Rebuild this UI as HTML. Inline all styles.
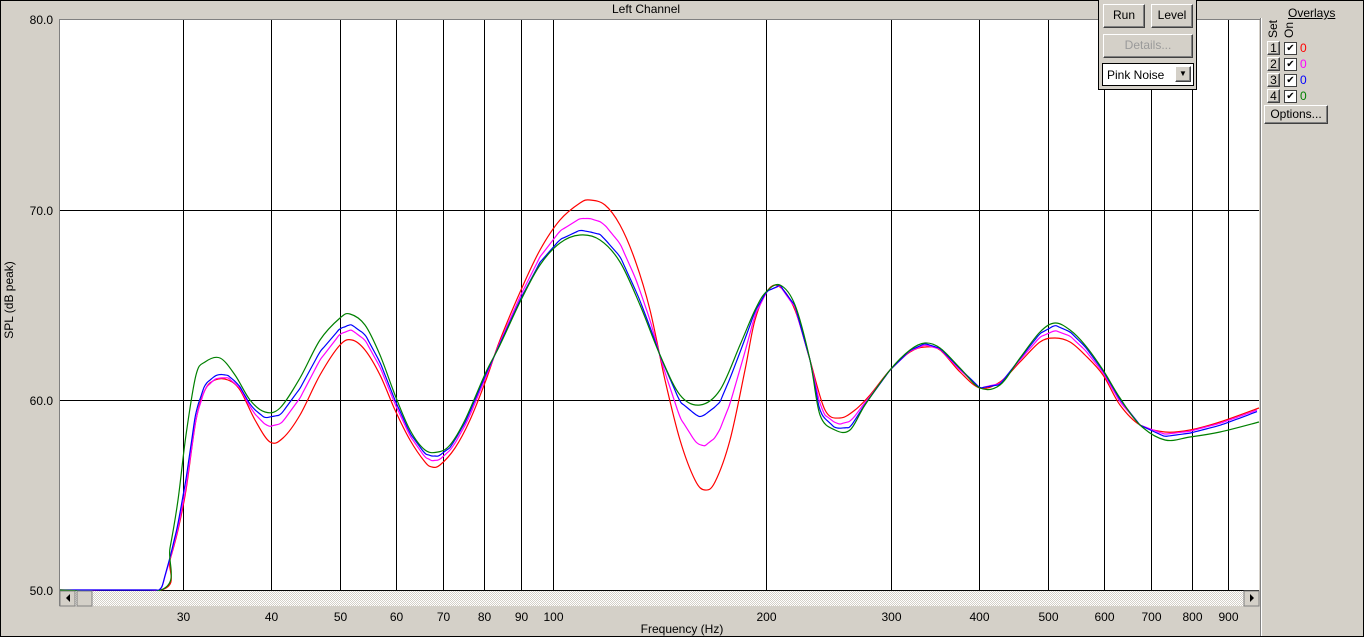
<!DOCTYPE html>
<html><head><meta charset="utf-8"><style>
body{margin:0;width:1364px;height:637px;background:#d4d0c8;font-family:"Liberation Sans",Arial,sans-serif;font-size:12px;overflow:hidden;position:relative}
.a{position:absolute}
.btn{position:absolute;background:#d4d0c8;border:1px solid;border-color:#fff #404040 #404040 #fff;box-shadow:inset -1px -1px 0 #808080;text-align:center;font-size:12px;line-height:20px}
.lbl{position:absolute;font-size:12px}
</style></head><body>
<div class="a" style="left:0;top:0;width:1362px;height:635px;border:1px solid #000"></div>
<div class="lbl" style="left:612px;top:2px">Left Channel</div>
<svg class="a" style="left:0;top:0" width="1364" height="637">
<rect x="60" y="20" width="1199" height="570" fill="#fff"/>
<g stroke="#000" stroke-width="1">
<line x1="60" y1="210.5" x2="1259" y2="210.5"/><line x1="60" y1="400.5" x2="1259" y2="400.5"/>
<line x1="60" y1="590.5" x2="1259" y2="590.5"/>
<g id="vg"></g>
</g>
<line x1="59.5" y1="19" x2="59.5" y2="606" stroke="#808080"/>
<line x1="59" y1="19.5" x2="1260" y2="19.5" stroke="#808080"/>
<g id="curves" fill="none" stroke-width="1.2"></g>
<text x="13" y="300" transform="rotate(-90 13 300)" text-anchor="middle" font-size="12" font-family="Liberation Sans">SPL (dB peak)</text>
<g font-size="12" font-family="Liberation Sans" text-anchor="end">
<text x="53" y="24">80.0</text><text x="53" y="215">70.0</text><text x="53" y="405">60.0</text><text x="53" y="595">50.0</text>
</g>
<g id="xl" font-size="12" font-family="Liberation Sans" text-anchor="middle"></g>
<text x="682" y="633" text-anchor="middle" font-size="12" font-family="Liberation Sans">Frequency (Hz)</text>
<defs><pattern id="hp" width="2" height="2" patternUnits="userSpaceOnUse"><rect width="2" height="2" fill="#fff"/><rect width="1" height="1" fill="#d4d0c8"/><rect x="1" y="1" width="1" height="1" fill="#d4d0c8"/></pattern></defs>
<rect x="60" y="591" width="1199" height="15" fill="url(#hp)"/>
<rect x="60" y="591" width="15" height="15" fill="#d4d0c8" stroke="#808080"/>
<polygon points="70,594 70,602 66,598" fill="#000"/>
<rect x="77" y="591" width="15" height="15" fill="#d4d0c8" stroke="#808080"/>
<rect x="1244" y="591" width="15" height="15" fill="#d4d0c8" stroke="#808080"/>
<polygon points="1250,594 1250,602 1254,598" fill="#000"/>
<line x1="1261.5" y1="18" x2="1261.5" y2="636" stroke="#fff"/>
<line x1="1260.5" y1="18" x2="1260.5" y2="636" stroke="#808080"/>
</svg>
<div class="a" style="left:1098px;top:0;width:97px;height:89px;border:1px solid #000;border-top:none;background:#d4d0c8"></div>
<div class="btn" style="left:1103px;top:4px;width:40px;height:22px">Run</div>
<div class="btn" style="left:1151px;top:4px;width:40px;height:22px">Level</div>
<div class="btn" style="left:1103px;top:34px;width:88px;height:22px;color:#9a9a9a">Details...</div>
<div class="a" style="left:1102px;top:63px;width:90px;height:21px;background:#fff;border:1px solid #000"><span style="position:absolute;left:4px;top:4px">Pink Noise</span><div class="btn" style="left:72px;top:2px;width:14px;height:14px;line-height:14px;font-size:8px">▼</div></div>
<div class="lbl" style="left:1288px;top:6px;text-decoration:underline">Overlays</div>
<div class="lbl" style="left:1266px;top:38px;transform:rotate(-90deg);transform-origin:0 0">Set</div>
<div class="lbl" style="left:1282px;top:38px;transform:rotate(-90deg);transform-origin:0 0">On</div>
<div id="ov"></div>
<div class="btn" style="left:1264px;top:105px;width:62px;height:17px;line-height:17px">Options...</div>
<script>
const X=f=>553+707.6*Math.log10(f/100);
let vg='',xl='';
[30,40,50,60,70,80,90,100,200,300,400,500,600,700,800,900].forEach(f=>{const x=Math.round(X(f))+.5;vg+=`<line x1="${x}" y1="20" x2="${x}" y2="590"/>`;xl+=`<text x="${x}" y="621">${f}</text>`});
document.getElementById('vg').innerHTML=vg;document.getElementById('xl').innerHTML=xl;
const R=[[60,590],[161,590],[170,560],[178,530],[186,490],[196,420],[205,390],[215,380],[228,380],[240,390],[255,420],[270,442],[283,438],[300,415],[320,375],[340,345],[352,340],[365,350],[380,375],[395,410],[410,440],[425,462],[432,467],[440,465],[455,448],[470,420],[486,380],[500,340],[521,290],[540,250],[560,220],[580,203],[590,200],[605,205],[620,225],[635,260],[650,310],[665,380],[680,440],[695,480],[705,490],[715,482],[730,440],[745,370],[755,320],[768,290],[780,287],[795,310],[810,360],[825,410],[840,418],[855,410],[870,395],[890,370],[910,352],[925,347],[940,350],[960,372],[980,388],[1000,382],[1020,362],[1040,342],[1055,338],[1070,342],[1085,355],[1103,375],[1120,405],[1140,425],[1165,432],[1190,430],[1220,422],[1259,408]];
const G=[[60,590],[161,590],[170,548],[178,500],[186,435],[196,375],[205,362],[220,358],[235,375],[250,400],[265,412],[280,408],[300,378],[320,340],[340,318],[350,314],[365,325],[380,355],[395,395],[410,430],[425,450],[438,452],[450,445],[465,420],[486,372],[500,345],[521,300],[540,265],[560,243],[580,235],[600,240],[620,262],[640,305],[660,355],[680,395],[700,405],[720,390],[740,345],[755,310],[766,292],[780,285],[795,305],[810,360],[820,415],[835,430],[850,430],[865,405],[890,370],[910,350],[925,343],[940,348],[960,368],[980,388],[1000,385],[1020,358],[1040,332],[1055,323],[1070,330],[1085,345],[1103,370],[1120,398],[1140,425],[1165,440],[1190,437],[1220,432],[1259,422]];
const TB=[[60,0.8],[215,0.8],[270,0.2],[345,0.4],[440,0.3],[560,0.15],[1103,0.15],[1200,0.6],[1259,0.8]];
const TM=[[60,0.95],[215,0.95],[270,0.5],[345,0.6],[440,0.6],[600,0.5],[1103,0.5],[1200,0.85],[1259,0.9]];
function interp(P,x){for(let i=1;i<P.length;i++)if(x<=P[i][0]){const a=P[i-1],b=P[i];return a[1]+(b[1]-a[1])*(x-a[0])/(b[0]-a[0]||1)}return P[P.length-1][1]}
function smooth(P){let d=`M${P[0][0]},${P[0][1]}`;for(let i=0;i<P.length-1;i++){const p0=P[i-1]||P[i],p1=P[i],p2=P[i+1],p3=P[i+2]||p2;d+=` C${p1[0]+(p2[0]-p0[0])/6},${p1[1]+(p2[1]-p0[1])/6} ${p2[0]-(p3[0]-p1[0])/6},${p2[1]-(p3[1]-p1[1])/6} ${p2[0]},${p2[1]}`}return d}
function blend(T){const P=[];for(let x=60;x<=1259;x+=3){const g=interp(G,x),r=interp(R,x),t=interp(T,x);P.push([x,g+t*(r-g)])}return P}
let c='';
c+=`<path d="${smooth(R)}" stroke="#ff0000"/>`;
c+=`<path d="${smooth(blend(TM))}" stroke="#ff00ff"/>`;
c+=`<path d="${smooth(blend(TB))}" stroke="#0000ff"/>`;
c+=`<path d="${smooth(G)}" stroke="#008000"/>`;
document.getElementById('curves').innerHTML=c;
let o='';const cols=['#ff0000','#ff00ff','#0000ff','#008000'];
for(let i=0;i<4;i++){const y=41+i*16;o+=`<div class="btn" style="left:1267px;top:${y}px;width:11px;height:12px;line-height:12px">${i+1}</div><div class="a" style="left:1284px;top:${y+1}px;width:11px;height:11px;background:#fff;border:1px solid #404040;font-size:10px;line-height:11px;text-align:center">✔</div><div class="lbl" style="left:1300px;top:${y}px;color:${cols[i]}">0</div>`}
document.getElementById('ov').innerHTML=o;
</script>
</body></html>
